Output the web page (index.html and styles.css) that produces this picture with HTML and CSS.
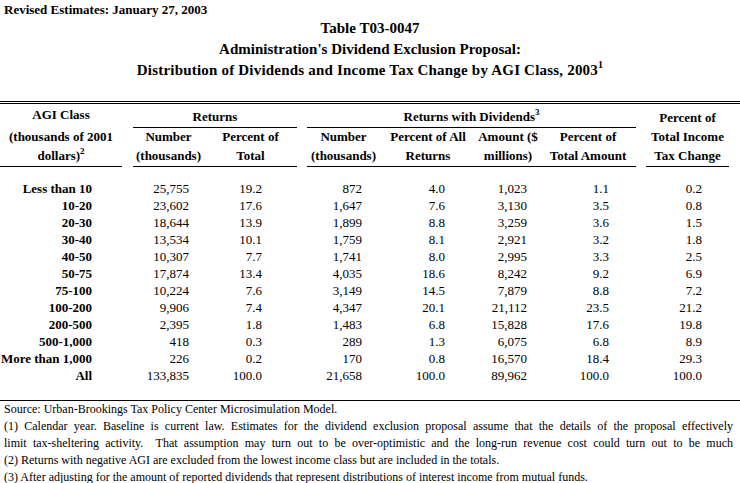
FILE: index.html
```html
<!DOCTYPE html>
<html>
<head>
<meta charset="utf-8">
<link rel="stylesheet" href="styles.css">
</head>
<body>
<div class="page">
  <div class="revised">Revised Estimates: January 27, 2003</div>
  <div class="title">
    <div class="title-line">Table T03-0047</div>
    <div class="title-line">Administration's Dividend Exclusion Proposal:</div>
    <div class="title-line title-wide">Distribution of Dividends and Income Tax Change by AGI Class, 2003<sup class="sup-title">1</sup></div>
  </div>
  <div class="double-rule"></div>
  <table class="data">
    <colgroup>
      <col class="w-agi"><col class="w-gap"><col class="w-rnum"><col class="w-rpct"><col class="w-gap2">
      <col class="w-dnum"><col class="w-dpct"><col class="w-amt"><col class="w-apct"><col class="w-gap2">
      <col class="w-last"><col class="w-end">
    </colgroup>
    <thead>
      <tr class="hrow-a">
        <th class="agi-h">AGI Class</th><th></th>
        <th colspan="2" class="ul">Returns</th><th></th>
        <th colspan="4" class="ul">Returns with Dividends<sup class="sup-h">3</sup></th><th></th>
        <th>Percent of</th><th></th>
      </tr>
      <tr class="hrow-b">
        <th>(thousands of 2001</th><th></th>
        <th>Number</th><th>Percent of</th><th></th>
        <th>Number</th><th>Percent of All</th><th>Amount ($</th><th>Percent of</th><th></th>
        <th>Total Income</th><th></th>
      </tr>
      <tr class="hrow-c">
        <th class="ul">dollars)<sup class="sup-h">2</sup></th><th></th>
        <th class="ul">(thousands)</th><th class="ul">Total</th><th></th>
        <th class="ul">(thousands)</th><th class="ul">Returns</th><th class="ul">millions)</th><th class="ul">Total Amount</th><th></th>
        <th class="ul">Tax Change</th><th></th>
      </tr>
    </thead>
    <tbody>
      <tr class="spacer-top"><td colspan="12"></td></tr>
      <tr><td class="agi">Less than 10</td><td></td><td class="c3">25,755</td><td class="c4">19.2</td><td></td><td class="c6">872</td><td class="c7">4.0</td><td class="c8">1,023</td><td class="c9">1.1</td><td></td><td class="c11">0.2</td><td></td></tr>
      <tr><td class="agi">10-20</td><td></td><td class="c3">23,602</td><td class="c4">17.6</td><td></td><td class="c6">1,647</td><td class="c7">7.6</td><td class="c8">3,130</td><td class="c9">3.5</td><td></td><td class="c11">0.8</td><td></td></tr>
      <tr><td class="agi">20-30</td><td></td><td class="c3">18,644</td><td class="c4">13.9</td><td></td><td class="c6">1,899</td><td class="c7">8.8</td><td class="c8">3,259</td><td class="c9">3.6</td><td></td><td class="c11">1.5</td><td></td></tr>
      <tr><td class="agi">30-40</td><td></td><td class="c3">13,534</td><td class="c4">10.1</td><td></td><td class="c6">1,759</td><td class="c7">8.1</td><td class="c8">2,921</td><td class="c9">3.2</td><td></td><td class="c11">1.8</td><td></td></tr>
      <tr><td class="agi">40-50</td><td></td><td class="c3">10,307</td><td class="c4">7.7</td><td></td><td class="c6">1,741</td><td class="c7">8.0</td><td class="c8">2,995</td><td class="c9">3.3</td><td></td><td class="c11">2.5</td><td></td></tr>
      <tr><td class="agi">50-75</td><td></td><td class="c3">17,874</td><td class="c4">13.4</td><td></td><td class="c6">4,035</td><td class="c7">18.6</td><td class="c8">8,242</td><td class="c9">9.2</td><td></td><td class="c11">6.9</td><td></td></tr>
      <tr><td class="agi">75-100</td><td></td><td class="c3">10,224</td><td class="c4">7.6</td><td></td><td class="c6">3,149</td><td class="c7">14.5</td><td class="c8">7,879</td><td class="c9">8.8</td><td></td><td class="c11">7.2</td><td></td></tr>
      <tr><td class="agi">100-200</td><td></td><td class="c3">9,906</td><td class="c4">7.4</td><td></td><td class="c6">4,347</td><td class="c7">20.1</td><td class="c8">21,112</td><td class="c9">23.5</td><td></td><td class="c11">21.2</td><td></td></tr>
      <tr><td class="agi">200-500</td><td></td><td class="c3">2,395</td><td class="c4">1.8</td><td></td><td class="c6">1,483</td><td class="c7">6.8</td><td class="c8">15,828</td><td class="c9">17.6</td><td></td><td class="c11">19.8</td><td></td></tr>
      <tr><td class="agi">500-1,000</td><td></td><td class="c3">418</td><td class="c4">0.3</td><td></td><td class="c6">289</td><td class="c7">1.3</td><td class="c8">6,075</td><td class="c9">6.8</td><td></td><td class="c11">8.9</td><td></td></tr>
      <tr><td class="agi">More than 1,000</td><td></td><td class="c3">226</td><td class="c4">0.2</td><td></td><td class="c6">170</td><td class="c7">0.8</td><td class="c8">16,570</td><td class="c9">18.4</td><td></td><td class="c11">29.3</td><td></td></tr>
      <tr><td class="agi">All</td><td></td><td class="c3">133,835</td><td class="c4">100.0</td><td></td><td class="c6">21,658</td><td class="c7">100.0</td><td class="c8">89,962</td><td class="c9">100.0</td><td></td><td class="c11">100.0</td><td></td></tr>
      <tr class="spacer-bottom"><td colspan="12"></td></tr>
    </tbody>
  </table>
  <div class="notes">
    <div class="note">Source: Urban-Brookings Tax Policy Center Microsimulation Model.</div>
    <div class="note note-just">(1) Calendar year. Baseline is current law. Estimates for the dividend exclusion proposal assume that the details of the proposal effectively</div>
    <div class="note note-just">limit tax-sheltering activity.&nbsp; That assumption may turn out to be over-optimistic and the long-run revenue cost could turn out to be much</div>
    <div class="note">(2) Returns with negative AGI are excluded from the lowest income class but are included in the totals.</div>
    <div class="note">(3) After adjusting for the amount of reported dividends that represent distributions of interest income from mutual funds.</div>
  </div>
</div>
</body>
</html>
```

FILE: styles.css
```css
html, body {
  margin: 0;
  padding: 0;
  background: #ffffff;
}
body {
  font-family: "Liberation Serif", "Times New Roman", serif;
  color: #000000;
  width: 740px;
  overflow: hidden;
}
.page {
  width: 740px;
}
.revised {
  font-weight: bold;
  font-size: 13px;
  line-height: 15px;
  padding: 2px 0 0 4px;
  height: 15px;
}
.title {
  text-align: center;
  font-weight: bold;
  font-size: 15px;
  padding-top: 1px;
}
.title-line {
  line-height: 21px;
  white-space: nowrap;
}
.title-wide {
  letter-spacing: 0.2px;
}
.sup-title {
  font-size: 10px;
  line-height: 0;
  vertical-align: 7px;
}
.double-rule {
  margin-top: 20px;
  height: 1px;
  border-top: 1px solid #000;
  border-bottom: 1px solid #000;
}
.data {
  width: 740px;
  table-layout: fixed;
  border-collapse: separate;
  border-spacing: 0;
  font-size: 13px;
}
.w-agi { width: 122px; }
.w-gap { width: 11px; }
.w-rnum { width: 71px; }
.w-rpct { width: 93px; }
.w-gap2 { width: 10px; }
.w-dnum { width: 73px; }
.w-dpct { width: 96px; }
.w-amt { width: 64px; }
.w-apct { width: 96px; }
.w-last { width: 83px; }
.w-end { width: 11px; }
.data th {
  font-weight: bold;
  text-align: center;
  white-space: nowrap;
  padding: 0;
  vertical-align: bottom;
  line-height: 16px;
}
.data td {
  padding: 0;
  white-space: nowrap;
  text-align: right;
  line-height: 17px;
  height: 17px;
}
.hrow-a th { height: 19px; padding-bottom: 2px; }
.hrow-b th { height: 17px; padding-bottom: 3px; }
.hrow-c th { height: 16px; padding-bottom: 2px; }
.data th.ul { border-bottom: 1px solid #000; }
.data th.agi-h { padding-bottom: 5px; }
.sup-h {
  font-size: 9px;
  line-height: 0;
  vertical-align: 6px;
}
.data tr.spacer-top td { height: 13px; line-height: 13px; }
.data tr.spacer-bottom td { height: 16px; line-height: 16px; border-bottom: 1px solid #000; }
.data td.agi { font-weight: bold; padding-right: 30px; }
.data td.c3 { padding-right: 15px; }
.data td.c4 { padding-right: 35px; }
.data td.c6 { padding-right: 18px; }
.data td.c7 { padding-right: 31px; }
.data td.c8 { padding-right: 13px; }
.data td.c9 { padding-right: 27px; }
.data td.c11 { padding-right: 27px; }
.notes {
  font-size: 12px;
  padding-left: 4px;
}
.note {
  line-height: 17px;
  white-space: nowrap;
}
.note-just {
  width: 729px;
  text-align: justify;
  text-align-last: justify;
  white-space: normal;
}
```
